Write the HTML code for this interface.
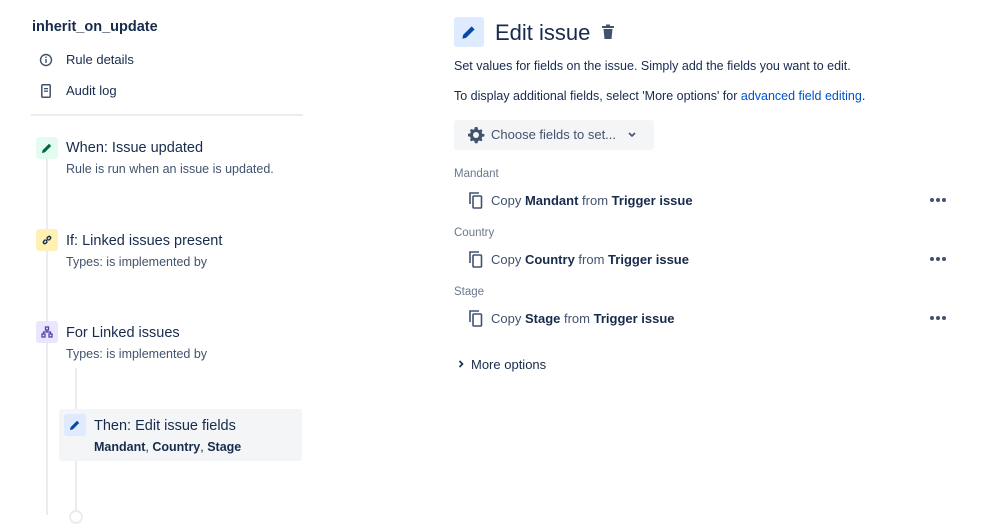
<!DOCTYPE html>
<html><head><meta charset="utf-8"><style>
*{margin:0;padding:0;box-sizing:border-box}
body{width:998px;height:515px;overflow:hidden;background:#fff;font-family:"Liberation Sans",sans-serif;color:#172b4d;position:relative}
.a{position:absolute;white-space:nowrap}
.t{font-size:14.5px;color:#172b4d}
.s{font-size:12.5px;color:#42526e}
.ic{position:absolute;width:22px;height:22px;border-radius:3px;display:flex;align-items:center;justify-content:center}
.lbl{font-size:11.5px;color:#6b778c}
.row{font-size:13px;color:#42526e}
.row b{color:#172b4d}
</style></head><body>
<div class="a" style="left:32px;top:19px;font-size:14.5px;font-weight:bold;color:#172b4d">inherit_on_update</div>
<svg class="a" style="left:39px;top:53px" width="14" height="14" viewBox="0 0 14 14"><circle cx="7" cy="7" r="5.5" fill="none" stroke="#42526e" stroke-width="1.4"/><rect x="6.3" y="6" width="1.4" height="4" fill="#42526e"/><rect x="6.3" y="3.6" width="1.4" height="1.4" fill="#42526e"/></svg>
<div class="a" style="left:66px;top:52px;font-size:13px;color:#172b4d">Rule details</div>
<svg class="a" style="left:41px;top:84px" width="10" height="14" viewBox="0 0 10 14"><rect x="0.8" y="0.8" width="8.4" height="12.4" rx="1" fill="none" stroke="#42526e" stroke-width="1.5"/><rect x="3" y="4" width="4" height="1.3" fill="#42526e"/><rect x="3" y="6.5" width="4" height="1.3" fill="#42526e"/></svg>
<div class="a" style="left:66px;top:83px;font-size:13px;color:#172b4d">Audit log</div>
<div class="a" style="left:31px;top:114px;width:272px;height:2px;background:#ebecf0"></div>

<div class="a" style="left:46px;top:155px;width:2px;height:360px;background:#ebecf0"></div>
<div class="a" style="left:75px;top:368px;width:2px;height:147px;background:#ebecf0"></div>
<div class="a" style="left:69px;top:510px;width:14px;height:14px;border-radius:50%;border:2px solid #ebecf0;background:#fff"></div>

<div class="ic" style="left:36px;top:137px;background:#e3fcef"><svg width="12" height="12" viewBox="0 0 12 12"><path d="M1 11l.6-2.8L8 1.8l2.2 2.2-6.4 6.4z" fill="#006644"/></svg></div>
<div class="a t" style="left:66px;top:140px">When: Issue updated</div>
<div class="a s" style="left:66px;top:162px">Rule is run when an issue is updated.</div>

<div class="ic" style="left:36px;top:229px;background:#fff0b3"><svg width="12" height="12" viewBox="0 0 12 12" fill="none" stroke="#172b4d" stroke-width="1.4"><path d="M5 7l2-2M4.5 5.5l-2 2a1.5 1.5 0 0 0 2 2l2-2M7.5 6.5l2-2a1.5 1.5 0 0 0-2-2l-2 2"/></svg></div>
<div class="a t" style="left:66px;top:233px">If: Linked issues present</div>
<div class="a s" style="left:66px;top:255px">Types: is implemented by</div>

<div class="ic" style="left:36px;top:321px;background:#eae6ff"><svg width="12" height="12" viewBox="0 0 12 12" fill="none" stroke="#5243aa" stroke-width="1.3"><rect x="4.5" y="1" width="3" height="3"/><rect x="1" y="8" width="3" height="3"/><rect x="8" y="8" width="3" height="3"/><path d="M6 4v2M2.5 8V6h7v2"/></svg></div>
<div class="a t" style="left:66px;top:325px">For Linked issues</div>
<div class="a s" style="left:66px;top:347px">Types: is implemented by</div>

<div class="a" style="left:59px;top:409px;width:243px;height:52px;background:#f4f5f7;border-radius:3px"></div>
<div class="ic" style="left:64px;top:414px;background:#deebff"><svg width="12" height="12" viewBox="0 0 12 12"><path d="M1 11l.6-2.8L8 1.8l2.2 2.2-6.4 6.4z" fill="#0747a6"/></svg></div>
<div class="a t" style="left:94px;top:418px">Then: Edit issue fields</div>
<div class="a" style="left:94px;top:440px;font-size:12.5px;color:#172b4d"><b>Mandant</b>, <b>Country</b>, <b>Stage</b></div>

<div class="ic" style="left:454px;top:17px;width:30px;height:30px;background:#deebff"><svg width="16" height="16" viewBox="0 0 12 12"><path d="M1 11l.6-2.8L8 1.8l2.2 2.2-6.4 6.4z" fill="#0747a6"/></svg></div>
<div class="a" style="left:495px;top:20px;font-size:22px;color:#172b4d">Edit issue</div>
<svg class="a" style="left:601px;top:24px" width="14" height="16" viewBox="0 0 14 16"><rect x="1" y="2" width="12" height="2" fill="#42526e"/><rect x="5" y="0.5" width="4" height="2" fill="#42526e"/><path d="M2.5 5h9l-1 10h-7z" fill="#42526e"/></svg>
<div class="a" style="left:454px;top:59px;font-size:12.5px;color:#172b4d">Set values for fields on the issue. Simply add the fields you want to edit.</div>
<div class="a" style="left:454px;top:89px;font-size:12.5px;color:#172b4d">To display additional fields, select 'More options' for <span style="color:#0052cc">advanced field editing</span>.</div>

<div class="a" style="left:454px;top:120px;width:200px;height:30px;background:#f4f5f7;border-radius:3px"></div>
<svg class="a" style="left:467px;top:126px" width="18" height="18" viewBox="0 0 18 18"><path d="M9 1l1.6.3.3 2.1 1.3.7 2-.8 1.2 1.2-.8 2 .7 1.3 2.1.3v2.4l-2.1.3-.7 1.3.8 2-1.2 1.2-2-.8-1.3.7-.3 2.1H7.8l-.3-2.1-1.3-.7-2 .8-1.2-1.2.8-2-.7-1.3L1 10.2V7.8l2.1-.3.7-1.3-.8-2 1.2-1.2 2 .8 1.3-.7.3-2.1z" fill="#42526e"/><circle cx="9" cy="9" r="3" fill="#f4f5f7"/></svg>
<div class="a" style="left:491px;top:127px;font-size:13px;color:#42526e">Choose fields to set...</div>
<svg class="a" style="left:627px;top:131px" width="10" height="8" viewBox="0 0 10 8"><path d="M2 2l3 3 3-3" fill="none" stroke="#42526e" stroke-width="1.6"/></svg>

<div class="a lbl" style="left:454px;top:168px">Mandant</div>
<div class="a lbl" style="left:454px;top:227px">Country</div>
<div class="a lbl" style="left:454px;top:286px">Stage</div>

<svg class="a" style="left:469px;top:192px" width="14" height="17" viewBox="0 0 14 17"><path d="M1 12V1h9" fill="none" stroke="#42526e" stroke-width="1.6"/><rect x="4" y="4" width="8.5" height="12" rx="1" fill="none" stroke="#42526e" stroke-width="1.6"/></svg>
<div class="a row" style="left:491px;top:193px">Copy <b>Mandant</b> from <b>Trigger issue</b></div>
<svg class="a" style="left:929px;top:197px" width="18" height="6"><circle cx="3" cy="3" r="2" fill="#42526e"/><circle cx="9" cy="3" r="2" fill="#42526e"/><circle cx="15" cy="3" r="2" fill="#42526e"/></svg>

<svg class="a" style="left:469px;top:251px" width="14" height="17" viewBox="0 0 14 17"><path d="M1 12V1h9" fill="none" stroke="#42526e" stroke-width="1.6"/><rect x="4" y="4" width="8.5" height="12" rx="1" fill="none" stroke="#42526e" stroke-width="1.6"/></svg>
<div class="a row" style="left:491px;top:252px">Copy <b>Country</b> from <b>Trigger issue</b></div>
<svg class="a" style="left:929px;top:256px" width="18" height="6"><circle cx="3" cy="3" r="2" fill="#42526e"/><circle cx="9" cy="3" r="2" fill="#42526e"/><circle cx="15" cy="3" r="2" fill="#42526e"/></svg>

<svg class="a" style="left:469px;top:310px" width="14" height="17" viewBox="0 0 14 17"><path d="M1 12V1h9" fill="none" stroke="#42526e" stroke-width="1.6"/><rect x="4" y="4" width="8.5" height="12" rx="1" fill="none" stroke="#42526e" stroke-width="1.6"/></svg>
<div class="a row" style="left:491px;top:311px">Copy <b>Stage</b> from <b>Trigger issue</b></div>
<svg class="a" style="left:929px;top:315px" width="18" height="6"><circle cx="3" cy="3" r="2" fill="#42526e"/><circle cx="9" cy="3" r="2" fill="#42526e"/><circle cx="15" cy="3" r="2" fill="#42526e"/></svg>

<svg class="a" style="left:457px;top:360px" width="8" height="8" viewBox="0 0 8 8"><path d="M2.5 1l3 3-3 3" fill="none" stroke="#172b4d" stroke-width="1.6"/></svg>
<div class="a" style="left:471px;top:357px;font-size:13px;color:#172b4d">More options</div>
</body></html>
